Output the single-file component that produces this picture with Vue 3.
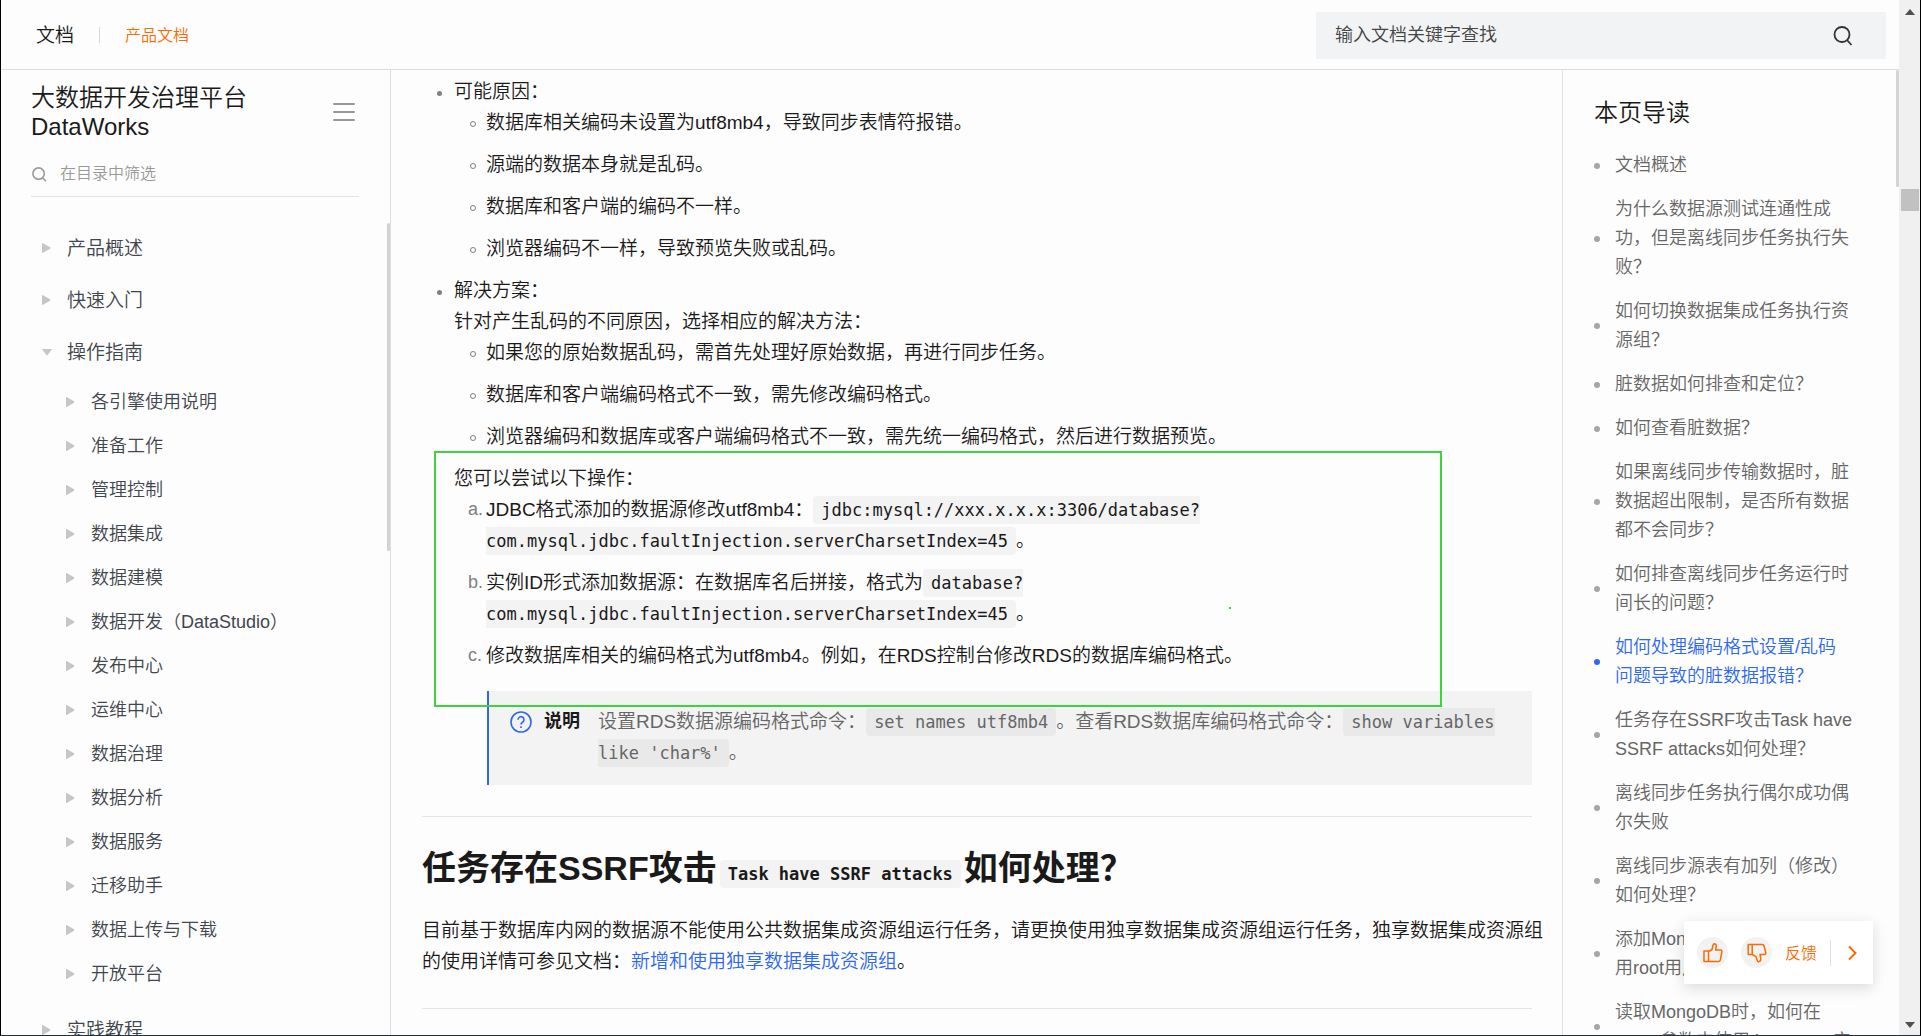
<script setup>
const guideTopics = [
  '各引擎使用说明', '准备工作', '管理控制', '数据集成', '数据建模',
  '数据开发（DataStudio）', '发布中心', '运维中心', '数据治理', '数据分析',
  '数据服务', '迁移助手', '数据上传与下载', '开放平台',
]

const tree = [
  { label: '产品概述' },
  { label: '快速入门' },
  { label: '操作指南', open: true, children: guideTopics },
  { label: '实践教程' },
]

const causes = [
  '数据库相关编码未设置为utf8mb4，导致同步表情符报错。',
  '源端的数据本身就是乱码。',
  '数据库和客户端的编码不一样。',
  '浏览器编码不一样，导致预览失败或乱码。',
]

const solutions = [
  '如果您的原始数据乱码，需首先处理好原始数据，再进行同步任务。',
  '数据库和客户端编码格式不一致，需先修改编码格式。',
  '浏览器编码和数据库或客户端编码格式不一致，需先统一编码格式，然后进行数据预览。',
]

const toc = [
  { label: '文档概述' },
  { label: '为什么数据源测试连通性成\n功，但是离线同步任务执行失\n败？' },
  { label: '如何切换数据集成任务执行资\n源组？' },
  { label: '脏数据如何排查和定位？' },
  { label: '如何查看脏数据？' },
  { label: '如果离线同步传输数据时，脏\n数据超出限制，是否所有数据\n都不会同步？' },
  { label: '如何排查离线同步任务运行时\n间长的问题？' },
  { label: '如何处理编码格式设置/乱码\n问题导致的脏数据报错？', active: true },
  { label: '任务存在SSRF攻击Task have\nSSRF attacks如何处理？' },
  { label: '离线同步任务执行偶尔成功偶\n尔失败' },
  { label: '离线同步源表有加列（修改）\n如何处理？' },
  { label: '添加MongoDB数据源时，使\n用root用户为何报错？' },
  { label: '读取MongoDB时，如何在\nquery参数中使用timestamp实' },
]
</script>

<template>
  <div class="window">
    <div class="page">
      <header class="topbar">
        <a class="brand" href="#">文档</a>
        <span class="divider"></span>
        <a class="crumb" href="#">产品文档</a>
        <form class="search" @submit.prevent>
          <input type="search" aria-label="搜索文档" placeholder="输入文档关键字查找" />
          <button type="submit" aria-label="搜索">
            <svg width="20" height="20" viewBox="0 0 20 20" fill="none" stroke="#333" stroke-width="1.8">
              <circle cx="9" cy="8.500" r="7.500" /><path d="M14 14 18.500 19" />
            </svg>
          </button>
        </form>
      </header>

      <div class="columns">
        <aside class="sidebar">
          <div class="product">
            <h2>大数据开发治理平台<br />DataWorks</h2>
            <button class="menu" aria-label="收起目录"><i></i><i></i><i></i></button>
          </div>
          <label class="filter">
            <svg width="15" height="15" viewBox="0 0 15 15" fill="none" stroke="#999" stroke-width="1.6">
              <circle cx="6.6" cy="6.6" r="5.7" /><path d="M10.6 10.8 14 14.2" />
            </svg>
            <input type="text" aria-label="目录筛选" placeholder="在目录中筛选" />
          </label>
          <ul class="tree">
            <li v-for="node in tree" :key="node.label">
              <button class="node">
                <svg v-if="node.open" class="caret" width="10" height="10" viewBox="0 0 10 10"><path d="M0.8 2h8.4q.8 0 .4.7L5.6 8q-.6.7-1.2 0L.4 2.7Q0 2 .8 2z" /></svg>
                <svg v-else class="caret" width="10" height="10" viewBox="0 0 10 10"><path d="M0 .8Q0-.3 1 .3L8 4.3q.8.7 0 1.4L1 9.7Q0 10.300 0 9.200z" /></svg>
                {{ node.label }}
              </button>
              <ul v-if="node.children" class="subtree">
                <li v-for="child in node.children" :key="child">
                  <button class="node sub">
                    <svg class="caret" width="10" height="10" viewBox="0 0 10 10"><path d="M0 .8Q0-.3 1 .3L8 4.3q.8.7 0 1.4L1 9.7Q0 10.300 0 9.200z" /></svg>
                    {{ child }}
                  </button>
                </li>
              </ul>
            </li>
          </ul>
          <div class="thumb tree-thumb"></div>
        </aside>

        <main class="article">
          <ul class="list disc">
            <li>
              <p>可能原因：</p>
              <ul class="list ring">
                <li v-for="text in causes" :key="text">{{ text }}</li>
              </ul>
            </li>
            <li>
              <p>解决方案：</p>
              <p>针对产生乱码的不同原因，选择相应的解决方法：</p>
              <ul class="list ring">
                <li v-for="text in solutions" :key="text">{{ text }}</li>
              </ul>
              <div class="steps">
                <p>您可以尝试以下操作：</p>
                <ol class="list alpha">
                  <li data-mark="a.">JDBC格式添加的数据源修改utf8mb4：<code>jdbc:mysql://xxx.x.x.x:3306/database?<br />com.mysql.jdbc.faultInjection.serverCharsetIndex=45</code>。</li>
                  <li data-mark="b.">实例ID形式添加数据源：在数据库名后拼接，格式为<code>database?<br />com.mysql.jdbc.faultInjection.serverCharsetIndex=45</code>。</li>
                  <li data-mark="c.">修改数据库相关的编码格式为utf8mb4。例如，在RDS控制台修改RDS的数据库编码格式。</li>
                </ol>
                <div class="marker-box"><span class="marker-dot"></span></div>
              </div>
              <div class="note">
                <svg width="22" height="22" viewBox="0 0 22 22" fill="none" stroke="#2f68f0" stroke-width="1.6">
                  <circle cx="11" cy="11" r="10" />
                  <path d="M8 8.700a3 3 0 1 1 4.600 2.500q-1.600 1-1.600 2.300" /><path d="M11 15.200v1.800" />
                </svg>
                <strong>说明</strong>
                <p>设置RDS数据源编码格式命令：<code>set names utf8mb4</code>。查看RDS数据库编码格式命令：<code>show variables<br />like 'char%'</code>。</p>
              </div>
            </li>
          </ul>

          <hr />
          <h1>任务存在SSRF攻击<code>Task have SSRF attacks</code>如何处理？</h1>
          <p class="lead">目前基于数据库内网的数据源不能使用公共数据集成资源组运行任务，请更换使用独享数据集成资源组运行任务，独享数据集成资源组的使用详情可参见文档：<a href="#">新增和使用独享数据集成资源组</a>。</p>
          <hr />
        </main>

        <nav class="toc" aria-label="本页导读">
          <h2>本页导读</h2>
          <ul>
            <li v-for="item in toc" :key="item.label" :class="{ active: item.active }">
              <a href="#">{{ item.label }}</a>
            </li>
          </ul>
          <div class="thumb toc-thumb"></div>
        </nav>
      </div>
    </div>

    <div class="scrollbar">
      <svg width="10" height="6" viewBox="0 0 10 6"><path d="M0 6 5 0l5 6z" fill="#505050" /></svg>
      <div class="scroll-thumb"></div>
      <svg width="10" height="6" viewBox="0 0 10 6"><path d="M0 0 5 6l5-6z" fill="#505050" /></svg>
    </div>

    <div class="feedback">
      <button class="round" aria-label="有帮助">
        <svg width="20" height="20" viewBox="0 0 20 20" fill="none" stroke="#ff6a00" stroke-width="1.500" stroke-linejoin="round">
          <path d="M1 8h4.500v10.500H1zM5.500 8.500 9 6.500l1-4.500q.3-1.200 1.500-1.200 1.800.2 1.800 2.400L12.600 7H17.500q1.600.2 1.400 1.800l-1.600 8.200q-.4 1.500-1.900 1.500H5.500z" />
        </svg>
      </button>
      <button class="round" aria-label="没帮助">
        <svg width="20" height="20" viewBox="0 0 20 20" fill="none" stroke="#ff6a00" stroke-width="1.500" stroke-linejoin="round">
          <path d="M1.200 1.500h4v10h-4zM5.200 1.500h10.200q1.300 0 1.600 1.300l1.800 7q.2 1.700-1.300 1.700H13l.8 4.300q.1 2.600-2 3-1 .1-1.400-1L8.900 13.700 5.200 11.500z" />
        </svg>
      </button>
      <button class="feedback-text">反馈</button>
      <span class="split"></span>
      <button class="next" aria-label="展开">
        <svg width="9" height="16" viewBox="0 0 9 16" fill="none" stroke="#ff6a00" stroke-width="2"><path d="M1 1.500 7.500 8 1 14.500" /></svg>
      </button>
    </div>
  </div>
</template>

<style>
body {
  margin: 0;
  background: #fdfdfd;
}
</style>

<style scoped>
.window {
  display: flex;
  position: relative;
  box-sizing: border-box;
  height: 100vh;
  overflow: hidden;
  border: solid #000;
  border-width: 0 1px;
  border-bottom: 1px solid #22313f;
  background: #fdfdfd;
  color: #1a1a1a;
  font-family: "Liberation Sans", "Noto Sans CJK SC", sans-serif;
  font-weight: 350;
}
ul, ol, p, h1, h2 { margin: 0; padding: 0; }
ul, ol { list-style: none; }
a { color: inherit; text-decoration: none; }
button, input {
  border: 0;
  padding: 0;
  background: none;
  color: inherit;
  font: inherit;
  outline: 0;
}
.page {
  flex: 1;
  min-width: 0;
  display: flex;
  flex-direction: column;
}
.topbar {
  display: flex;
  align-items: center;
  flex: none;
  box-sizing: border-box;
  height: 70px;
  padding: 0 13px 0 35px;
  border-bottom: 1px solid #dedede;
}
.brand, .crumb { margin-bottom: 2px; }
.brand { font-size: 19px; }
.divider {
  width: 1px;
  height: 16px;
  margin: 0 25px;
  background: #d8d8d8;
}
.crumb { font-size: 16px; color: #ff6a00; }
.search {
  display: flex;
  align-items: center;
  box-sizing: border-box;
  width: 570px;
  height: 47px;
  margin: 2px 0 0 auto;
  padding: 0 33px 0 19px;
  background: #f2f3f5;
}
.search input { flex: 1; font-size: 18px; }
.search input::placeholder { color: #444; opacity: 1; }
.search button { display: flex; }

.columns { flex: 1; min-height: 0; display: flex; }

.sidebar {
  position: relative;
  flex: none;
  box-sizing: border-box;
  width: 390px;
  overflow: hidden;
  border-right: 1px solid #dedede;
}
.product {
  display: flex;
  justify-content: space-between;
  padding: 13px 35px 0 30px;
}
.product h2 {
  font-size: 24px;
  line-height: 29px;
  font-weight: inherit;
}
.menu {
  display: flex;
  flex-direction: column;
  gap: 6px;
  align-self: center;
  width: 22px;
}
.menu i { height: 2px; border-radius: 1px; background: #999; }
.filter {
  display: flex;
  align-items: center;
  gap: 13px;
  height: 44px;
  margin: 11px 31px 23px 30px;
  padding-left: 1px;
  border-bottom: 1px solid #e3e3e3;
}
.filter input { flex: 1; min-width: 0; font-size: 16px; }
.filter input::placeholder { color: #999; opacity: 1; }
.node {
  display: flex;
  align-items: center;
  gap: 15px;
  width: 100%;
  height: 52px;
  padding-left: 41px;
  font-size: 19px;
  color: #3f464d;
  text-align: left;
}
.node.sub { height: 44px; padding-left: 65px; font-size: 18px; }
.subtree { padding: 2px 0 8px; }
.caret { flex: none; margin-top: 3px; fill: #c6c6c6; }
.thumb {
  position: absolute;
  right: 0;
  width: 3px;
  border-radius: 2px;
  background: #d3d3d3;
}
.tree-thumb { top: 153px; height: 328px; }
.toc-thumb { top: 0; height: 117px; }

.article {
  flex: 1;
  min-width: 0;
  padding: 6px 30px 0 31px;
  overflow: hidden;
  font-size: 19px;
  line-height: 31px;
}
.list > li { position: relative; }
.list > li::before { position: absolute; }
.disc { padding-left: 32px; }
.disc > li::before {
  content: "";
  left: -17px;
  top: 15px;
  width: 5px;
  height: 5px;
  border-radius: 50%;
  background: #808080;
}
.ring, .alpha { padding-left: 32px; }
.ring > li, .alpha > li { margin-bottom: 11px; }
.ring > li::before {
  content: "";
  left: -16px;
  top: 14px;
  width: 4px;
  height: 4px;
  border: 1px solid #808080;
  border-radius: 50%;
}
.alpha > li::before {
  content: attr(data-mark);
  left: -18px;
  font-size: 18px;
  color: #808080;
}
code {
  padding: 4px 8px;
  border-radius: 4px;
  background: #f3f3f3;
  font-family: "DejaVu Sans Mono", monospace;
  font-size: 17px;
  line-height: 1;
}
.steps { position: relative; }
.marker-box {
  position: absolute;
  top: -12px;
  bottom: -36px;
  left: -20px;
  right: 90px;
  border: 2px solid #3dd33d;
}
.marker-dot {
  position: absolute;
  top: 61%;
  left: 79%;
  width: 2px;
  height: 2px;
  background: #3dd33d;
}
.note {
  display: flex;
  align-items: flex-start;
  margin: 20px 0 0 33px;
  padding: 15px 0 17px 21px;
  border-left: 2px solid #2f68f0;
  background: #f3f3f3;
  color: #666;
}
.note svg { margin: 5px 12px 0 0; }
.note strong {
  width: 54px;
  color: #1a1a1a;
  font-size: 18px;
  font-weight: 700;
}
.note code { background: #e9e9e9; }
hr {
  height: 1px;
  margin: 31px 0 0;
  border: 0;
  background: #e5e5e5;
}
h1 {
  margin: 30px 0 26px;
  font-size: 34px;
  line-height: 42px;
  font-weight: 700;
}
h1 code { margin: 0 3px; }
.lead { margin-right: -14px; }
.lead a { color: #2f68f0; }

.toc {
  position: relative;
  flex: none;
  box-sizing: border-box;
  width: 337px;
  padding: 25px 20px 0 31px;
  overflow: hidden;
  border-left: 1px solid #e3e3e3;
}
.toc h2 {
  margin-bottom: 20px;
  font-size: 24px;
  line-height: 36px;
  font-weight: inherit;
}
.toc li {
  display: flex;
  align-items: center;
  gap: 15px;
  margin-bottom: 15px;
  font-size: 18px;
  line-height: 29px;
  color: #666;
  white-space: pre;
}
.toc li::before {
  content: "";
  width: 6px;
  height: 6px;
  border-radius: 50%;
  background: #a6a6a6;
}
.toc li.active { color: #2f68f0; }
.toc li.active::before { background: #2f68f0; }

.scrollbar {
  display: flex;
  flex-direction: column;
  align-items: center;
  box-sizing: border-box;
  width: 21px;
  padding: 9px 0 7px;
  background: #f0f0f0;
}
.scroll-thumb {
  width: 18px;
  height: 22px;
  margin: 174px 0 auto;
  background: #c1c1c1;
}

.feedback {
  position: absolute;
  right: 47px;
  bottom: 51px;
  display: flex;
  align-items: center;
  box-sizing: border-box;
  width: 189px;
  height: 63px;
  padding-left: 13px;
  background: #fff;
  box-shadow: 0 4px 14px rgba(0, 0, 0, 0.14);
  color: #ff6a00;
}
.round {
  display: flex;
  align-items: center;
  justify-content: center;
  width: 31px;
  height: 31px;
  margin-right: 13px;
  border-radius: 50%;
  background: #f2f2f2;
}
.feedback-text { margin-bottom: 2px; font-size: 16px; }
.split {
  width: 1px;
  height: 26px;
  margin: 0 17px 0 13px;
  background: #e0e0e0;
}
.next { display: flex; }
</style>
